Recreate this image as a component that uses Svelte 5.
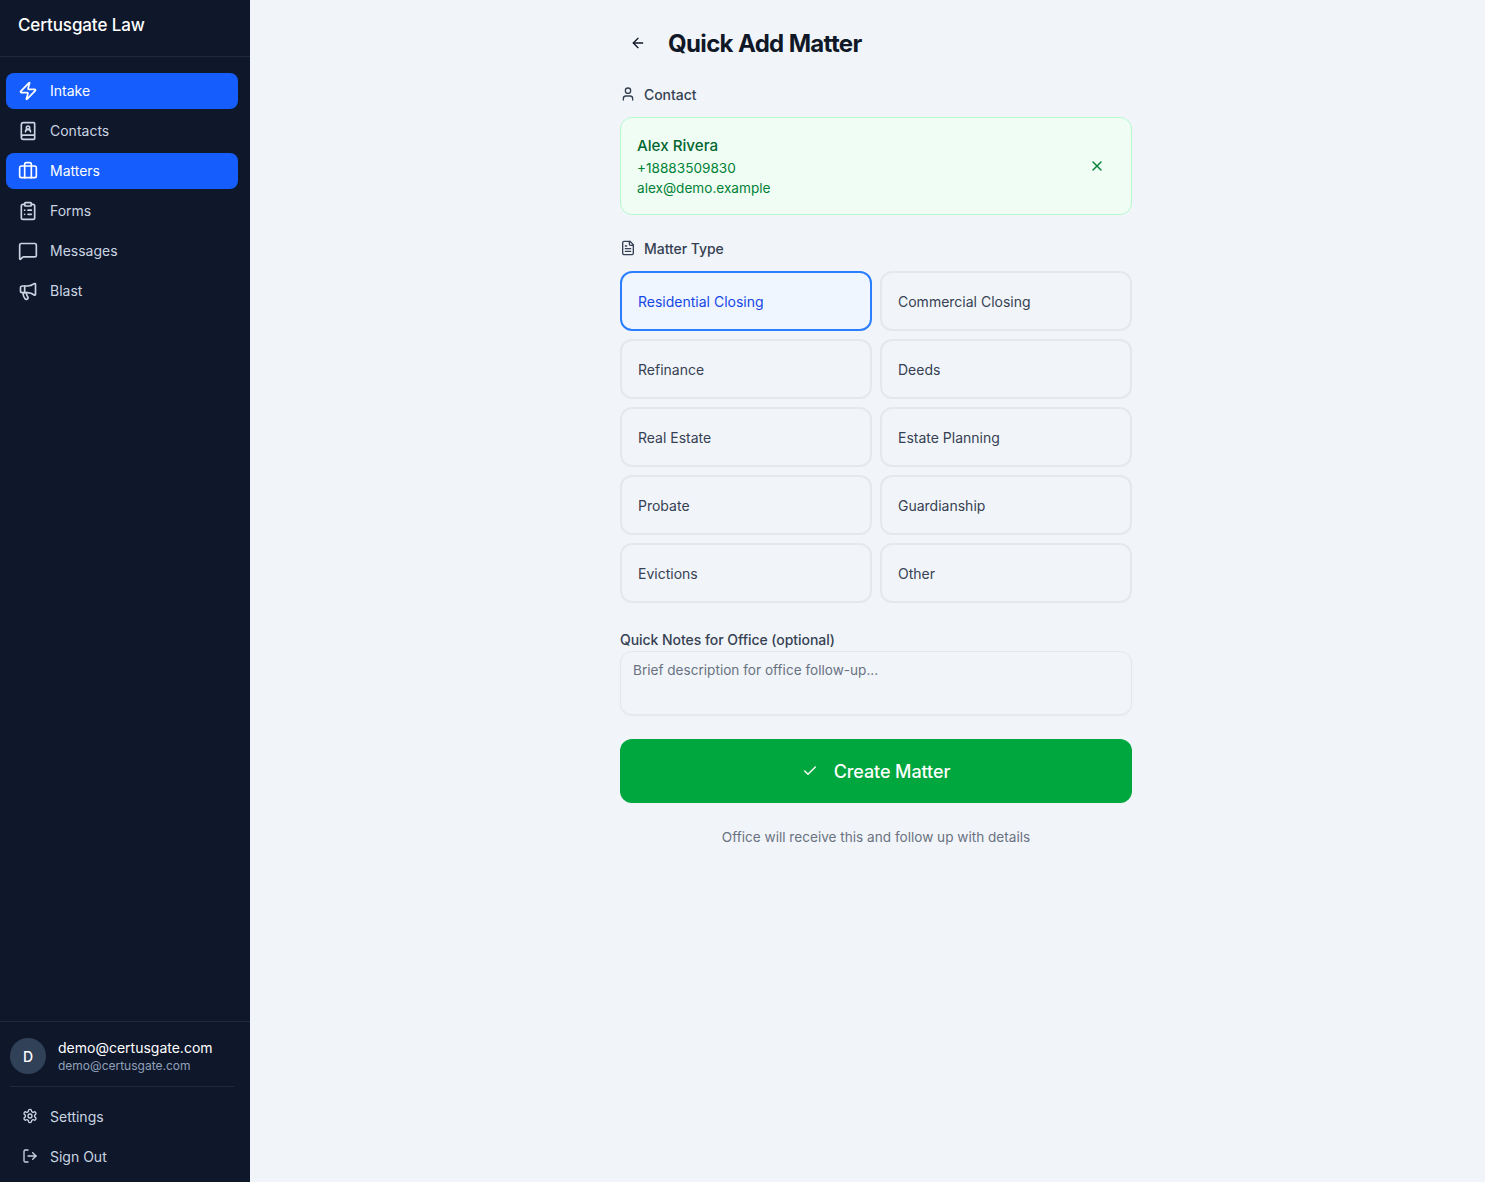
<script>
	const nav = [
		{ label: 'Intake', icon: 'zap', active: true },
		{ label: 'Contacts', icon: 'book', active: false },
		{ label: 'Matters', icon: 'briefcase', active: true },
		{ label: 'Forms', icon: 'clipboard', active: false },
		{ label: 'Messages', icon: 'message', active: false },
		{ label: 'Blast', icon: 'megaphone', active: false }
	];

	const types = [
		'Residential Closing',
		'Commercial Closing',
		'Refinance',
		'Deeds',
		'Real Estate',
		'Estate Planning',
		'Probate',
		'Guardianship',
		'Evictions',
		'Other'
	];

	let selected = $state('Residential Closing');
	let notes = $state('');
</script>

{#snippet icon(name, size = 20)}
	<svg class="icon" width={size} height={size} viewBox="0 0 24 24" fill="none" stroke="currentColor" stroke-width="2" stroke-linecap="round" stroke-linejoin="round">
		{#if name === 'zap'}
			<path d="M4 14a1 1 0 0 1-.78-1.63l9.9-10.2a.5.5 0 0 1 .86.46l-1.92 6.02A1 1 0 0 0 13 10h7a1 1 0 0 1 .78 1.63l-9.9 10.2a.5.5 0 0 1-.86-.46l1.92-6.02A1 1 0 0 0 11 14z" />
		{:else if name === 'book'}
			<path d="M15 13a3 3 0 1 0-6 0" />
			<path d="M4 19.5v-15A2.5 2.5 0 0 1 6.5 2H19a1 1 0 0 1 1 1v18a1 1 0 0 1-1 1H6.5a1 1 0 0 1 0-5H20" />
			<circle cx="12" cy="8" r="2" />
		{:else if name === 'briefcase'}
			<path d="M16 20V4a2 2 0 0 0-2-2h-4a2 2 0 0 0-2 2v16" />
			<rect width="20" height="14" x="2" y="6" rx="2" />
		{:else if name === 'clipboard'}
			<rect width="8" height="4" x="8" y="2" rx="1" />
			<path d="M16 4h2a2 2 0 0 1 2 2v14a2 2 0 0 1-2 2H6a2 2 0 0 1-2-2V6a2 2 0 0 1 2-2h2" />
			<path d="M12 11h4" />
			<path d="M12 16h4" />
			<path d="M8 11h.01" />
			<path d="M8 16h.01" />
		{:else if name === 'message'}
			<path d="M22 17a2 2 0 0 1-2 2H6.828a2 2 0 0 0-1.414.586l-2.202 2.202A.71.71 0 0 1 2 21.286V5a2 2 0 0 1 2-2h16a2 2 0 0 1 2 2z" />
		{:else if name === 'megaphone'}
			<path d="M11 6a13 13 0 0 0 8.4-2.8A1 1 0 0 1 21 4v12a1 1 0 0 1-1.6.8A13 13 0 0 0 11 14H5a2 2 0 0 1-2-2V8a2 2 0 0 1 2-2z" />
			<path d="M6 14a12 12 0 0 0 2.4 7.2 2 2 0 0 0 3.2-2.4A8 8 0 0 1 10 14" />
			<path d="M8 6v8" />
		{:else if name === 'settings'}
			<path d="M12.22 2h-.44a2 2 0 0 0-2 2v.18a2 2 0 0 1-1 1.73l-.43.25a2 2 0 0 1-2 0l-.15-.08a2 2 0 0 0-2.73.73l-.22.38a2 2 0 0 0 .73 2.73l.15.1a2 2 0 0 1 1 1.72v.51a2 2 0 0 1-1 1.74l-.15.09a2 2 0 0 0-.73 2.73l.22.38a2 2 0 0 0 2.73.73l.15-.08a2 2 0 0 1 2 0l.43.25a2 2 0 0 1 1 1.73V20a2 2 0 0 0 2 2h.44a2 2 0 0 0 2-2v-.18a2 2 0 0 1 1-1.73l.43-.25a2 2 0 0 1 2 0l.15.08a2 2 0 0 0 2.73-.73l.22-.39a2 2 0 0 0-.73-2.73l-.15-.08a2 2 0 0 1-1-1.74v-.5a2 2 0 0 1 1-1.74l.15-.09a2 2 0 0 0 .73-2.73l-.22-.38a2 2 0 0 0-2.73-.73l-.15.08a2 2 0 0 1-2 0l-.43-.25a2 2 0 0 1-1-1.73V4a2 2 0 0 0-2-2z" />
			<circle cx="12" cy="12" r="3" />
		{:else if name === 'logout'}
			<path d="m16 17 5-5-5-5" />
			<path d="M21 12H9" />
			<path d="M9 21H5a2 2 0 0 1-2-2V5a2 2 0 0 1 2-2h4" />
		{:else if name === 'user'}
			<path d="M19 21v-2a4 4 0 0 0-4-4H9a4 4 0 0 0-4 4v2" />
			<circle cx="12" cy="7" r="4" />
		{:else if name === 'file'}
			<path d="M15 2H6a2 2 0 0 0-2 2v16a2 2 0 0 0 2 2h12a2 2 0 0 0 2-2V7Z" />
			<path d="M14 2v4a2 2 0 0 0 2 2h4" />
			<path d="M10 9H8" />
			<path d="M16 13H8" />
			<path d="M16 17H8" />
		{:else if name === 'x'}
			<path d="M18 6 6 18" />
			<path d="m6 6 12 12" />
		{:else if name === 'check'}
			<path d="M20 6 9 17l-5-5" />
		{:else if name === 'back'}
			<path d="m12 19-7-7 7-7" />
			<path d="M19 12H5" />
		{/if}
	</svg>
{/snippet}

<div class="layout">
	<aside class="sidebar">
		<div class="brand">Certusgate Law</div>
		<nav class="nav">
			{#each nav as item}
				<button class="nav-item" class:active={item.active}>
					{@render icon(item.icon)}
					<span>{item.label}</span>
				</button>
			{/each}
		</nav>
		<div class="side-foot">
			<div class="account">
				<div class="avatar">D</div>
				<div class="account-text">
					<div class="account-name">demo@certusgate.com</div>
					<div class="account-mail">demo@certusgate.com</div>
				</div>
			</div>
			<button class="foot-item">
				{@render icon('settings', 16)}
				<span>Settings</span>
			</button>
			<button class="foot-item">
				{@render icon('logout', 16)}
				<span>Sign Out</span>
			</button>
		</div>
	</aside>

	<main class="main">
		<div class="content">
			<header class="head">
				<button class="back" aria-label="Back">{@render icon('back', 16)}</button>
				<h1>Quick Add Matter</h1>
			</header>

			<div class="label">
				{@render icon('user', 16)}
				<span>Contact</span>
			</div>
			<div class="contact">
				<div>
					<div class="contact-name">Alex Rivera</div>
					<div class="contact-line">+18883509830</div>
					<div class="contact-line">alex@demo.example</div>
				</div>
				<button class="clear" aria-label="Clear contact">{@render icon('x', 16)}</button>
			</div>

			<div class="label">
				{@render icon('file', 16)}
				<span>Matter Type</span>
			</div>
			<div class="types">
				{#each types as t}
					<button class="type" class:selected={selected === t} onclick={() => (selected = t)}>{t}</button>
				{/each}
			</div>

			<label class="notes-label" for="notes">Quick Notes for Office (optional)</label>
			<textarea id="notes" class="notes" rows="2" placeholder="Brief description for office follow-up..." bind:value={notes}></textarea>

			<button class="create">
				{@render icon('check', 16)}
				<span>Create Matter</span>
			</button>
			<p class="hint">Office will receive this and follow up with details</p>
		</div>
	</main>
</div>

<style>
	:global(body) {
		margin: 0;
		background: #f1f5f9;
	}

	.layout {
		display: flex;
		height: 1182px;
		font-family: Inter, "Noto Sans", sans-serif;
		background: #f1f5f9;
	}

	button {
		font-family: inherit;
		cursor: pointer;
	}

	.icon {
		flex: none;
		display: block;
	}

	.sidebar {
		width: 250px;
		flex: none;
		display: flex;
		flex-direction: column;
		background: #0f172b;
		color: #cad5e2;
	}

	.brand {
		height: 56px;
		padding: 0 18px;
		line-height: 50px;
		font-size: 17px;
		font-weight: 500;
		letter-spacing: -0.1px;
		color: #fff;
		border-bottom: 1px solid #1d293d;
	}

	.nav {
		flex: 1;
		display: flex;
		flex-direction: column;
		gap: 4px;
		padding: 16px 12px 0 6px;
	}

	.nav-item {
		display: flex;
		align-items: center;
		gap: 12px;
		height: 36px;
		padding: 0 12px;
		border: 0;
		border-radius: 8px;
		background: transparent;
		color: #cad5e2;
		font-size: 14px;
		line-height: 20px;
		text-align: left;
	}

	.nav-item.active {
		background: #155dfc;
		color: #fff;
	}

	.side-foot {
		border-top: 1px solid #1d293d;
		padding: 16px 16px 4px 10px;
	}

	.account {
		display: flex;
		align-items: center;
		gap: 12px;
		padding-bottom: 12px;
		border-bottom: 1px solid #1d293d;
		margin-bottom: 11px;
	}

	.avatar {
		width: 36px;
		height: 36px;
		border-radius: 50%;
		background: #314158;
		color: #fff;
		font-size: 14px;
		font-weight: 500;
		display: flex;
		align-items: center;
		justify-content: center;
	}

	.account-name {
		font-size: 14px;
		line-height: 20px;
		color: #fff;
	}

	.account-mail {
		font-size: 12px;
		line-height: 16px;
		color: #90a1b9;
	}

	.foot-item {
		display: flex;
		align-items: center;
		gap: 12px;
		width: 100%;
		height: 36px;
		margin-bottom: 4px;
		padding: 0 12px;
		border: 0;
		background: transparent;
		color: #cad5e2;
		font-size: 14px;
	}

	.main {
		flex: 1;
		display: flex;
		justify-content: center;
		padding-left: 17px;
	}

	.content {
		width: 512px;
	}

	.head {
		display: flex;
		align-items: center;
		gap: 12px;
		height: 36px;
		margin-top: 26px;
		margin-bottom: 22px;
	}

	.back {
		width: 36px;
		height: 36px;
		display: flex;
		align-items: center;
		justify-content: center;
		border: 0;
		background: transparent;
		color: #101828;
		padding: 0 0 2px;
	}

	h1 {
		margin: 0;
		font-size: 24px;
		line-height: 36px;
		font-weight: 700;
		letter-spacing: -0.65px;
		color: #101828;
	}

	.label {
		display: flex;
		align-items: center;
		gap: 8px;
		height: 20px;
		margin-bottom: 13px;
		font-size: 14px;
		font-weight: 500;
		letter-spacing: -0.05px;
		color: #364153;
	}

	.contact {
		display: flex;
		align-items: center;
		justify-content: space-between;
		box-sizing: border-box;
		height: 98px;
		padding: 0 26px 0 16px;
		margin-bottom: 23px;
		background: #f0fdf4;
		border: 1px solid #b9f8cf;
		border-radius: 12px;
	}

	.contact-name {
		font-size: 15.2px;
		line-height: 24px;
		font-weight: 500;
		color: #016630;
	}

	.contact-line {
		font-size: 13.6px;
		line-height: 20px;
		color: #008236;
	}

	.clear {
		padding: 0;
		border: 0;
		background: transparent;
		color: #008236;
	}

	.types {
		display: grid;
		grid-template-columns: 1fr 1fr;
		gap: 8px;
		margin-bottom: 28px;
	}

	.type {
		height: 60px;
		padding: 0 16px;
		text-align: left;
		font-size: 14px;
		color: #364153;
		background: #f1f5f9;
		border: 2px solid #e5e7eb;
		border-radius: 12px;
	}

	.type.selected {
		background: #eff6ff;
		border-color: #2b7fff;
		color: #1447e6;
	}

	.notes-label {
		display: block;
		font-size: 14px;
		line-height: 18px;
		margin-bottom: 2px;
		font-weight: 500;
		letter-spacing: -0.05px;
		color: #364153;
	}

	.notes {
		display: block;
		box-sizing: border-box;
		width: 100%;
		height: 64px;
		margin-bottom: 24px;
		padding: 8px 12px;
		font-family: inherit;
		font-size: 13.6px;
		line-height: 20px;
		color: #101828;
		background: #f1f5f9;
		border: 1px solid #e5e7eb;
		border-radius: 12px;
		box-shadow: 0 1px 2px rgba(0, 0, 0, 0.05);
		resize: none;
		outline: none;
	}

	.notes::placeholder {
		color: #6a7282;
		opacity: 1;
	}

	.create {
		display: flex;
		align-items: center;
		justify-content: center;
		gap: 16px;
		width: 100%;
		height: 64px;
		border: 0;
		border-radius: 12px;
		background: #00a63e;
		color: #fff;
		font-size: 18px;
		font-weight: 500;
		letter-spacing: -0.1px;
	}

	.hint {
		margin: 24px 0 0;
		text-align: center;
		font-size: 13.6px;
		line-height: 20px;
		color: #6a7282;
	}
</style>
